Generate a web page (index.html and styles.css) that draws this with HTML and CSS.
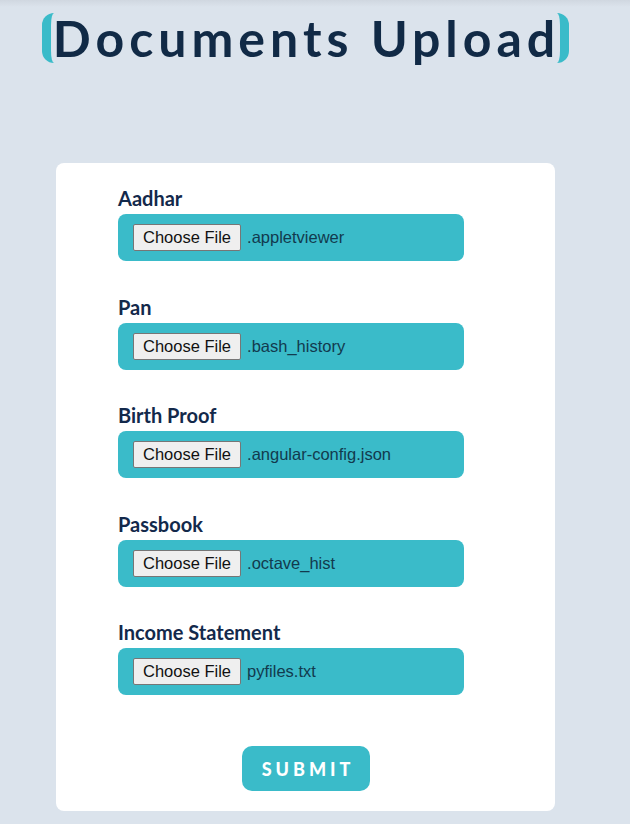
FILE: index.html
```html
<!DOCTYPE html>
<html lang="en">
<head>
<meta charset="utf-8">
<title>Documents Upload</title>
<link rel="stylesheet" href="styles.css">
</head>
<body>
<div class="page">
  <header class="header">
    <h1 class="title">Documents Upload</h1>
  </header>
  <form class="card">
    <div class="field">
      <label class="label">Aadhar</label>
      <div class="file-box"><button type="button" class="file-btn">Choose File</button><span class="file-name">.appletviewer</span></div>
    </div>
    <div class="field">
      <label class="label">Pan</label>
      <div class="file-box"><button type="button" class="file-btn">Choose File</button><span class="file-name">.bash_history</span></div>
    </div>
    <div class="field">
      <label class="label">Birth Proof</label>
      <div class="file-box"><button type="button" class="file-btn">Choose File</button><span class="file-name">.angular-config.json</span></div>
    </div>
    <div class="field">
      <label class="label">Passbook</label>
      <div class="file-box"><button type="button" class="file-btn">Choose File</button><span class="file-name">.octave_hist</span></div>
    </div>
    <div class="field last">
      <label class="label">Income Statement</label>
      <div class="file-box"><button type="button" class="file-btn">Choose File</button><span class="file-name">pyfiles.txt</span></div>
    </div>
    <div class="actions">
      <button type="button" class="submit">SUBMIT</button>
    </div>
  </form>
</div>
</body>
</html>
```
FILE: styles.css
```css
html, body {
  margin: 0;
  padding: 0;
}
body {
  background: #dbe3ec linear-gradient(to bottom, #d0d7e0 0px, #dbe3ec 7px) no-repeat;
  font-family: Lato, "Noto Sans", sans-serif;
  min-height: 824px;
}
.page {
  width: 611px;
  display: flex;
  flex-direction: column;
  align-items: center;
}
.header {
  padding-top: 13px;
  height: 150px;
  box-sizing: border-box;
}
.title {
  margin: 0;
  font-family: Lato, sans-serif;
  font-weight: 700;
  font-size: 50px;
  line-height: 50px;
  letter-spacing: 5px;
  color: #112a46;
  border-left: 9px solid #3abbc9;
  border-right: 9px solid #3abbc9;
  border-radius: 12px;
  padding: 0 0 0 2px;
}
.card {
  margin-top: 13px;
  width: 499px;
  box-sizing: border-box;
  background: #ffffff;
  border-radius: 8px;
  padding: 24px 91px 20px 62px;
}
.field {
  margin-bottom: 34.5px;
}
.field.last {
  margin-bottom: 51px;
}
.label {
  display: block;
  font-family: Lato, sans-serif;
  font-weight: 700;
  font-size: 20px;
  line-height: 22px;
  color: #13294b;
  margin-bottom: 5px;
}
.file-box {
  height: 47px;
  box-sizing: border-box;
  background: #3abbc9;
  border-radius: 8px;
  display: flex;
  align-items: center;
  padding-left: 15px;
}
.file-btn {
  font-family: "Liberation Sans", Arial, sans-serif;
  font-size: 16.5px;
  color: #111;
  background: #efefef;
  border: 1px solid #767676;
  border-radius: 2px;
  height: 27px;
  padding: 0 9px 0 9px;
  margin: 0 6px 0 0;
  line-height: 25px;
}
.file-name {
  font-family: "Liberation Sans", Arial, sans-serif;
  font-size: 16.5px;
  color: #123a4e;
}
.actions {
  display: flex;
  justify-content: center;
  margin-right: -30px;
}
.submit {
  width: 128px;
  height: 45px;
  border: none;
  border-radius: 10px;
  background: #3abbc9;
  color: #ffffff;
  font-family: Lato, sans-serif;
  font-weight: 900;
  font-size: 18px;
  letter-spacing: 4px;
  padding: 0 0 0 4px;
}
```
